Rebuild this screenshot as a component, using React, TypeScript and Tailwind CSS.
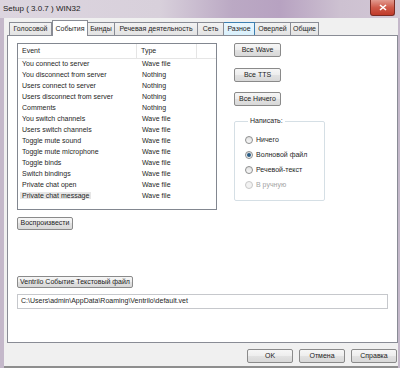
import React from "react";

const events: [string, string][] = [
  ["You connect to server", "Wave file"],
  ["You disconnect from server", "Nothing"],
  ["Users connect to server", "Nothing"],
  ["Users disconnect from server", "Nothing"],
  ["Comments", "Nothing"],
  ["You switch channels", "Wave file"],
  ["Users switch channels", "Wave file"],
  ["Toggle mute sound", "Wave file"],
  ["Toggle mute microphone", "Wave file"],
  ["Toggle binds", "Wave file"],
  ["Switch bindings", "Wave file"],
  ["Private chat open", "Wave file"],
  ["Private chat message", "Wave file"],
];

const tabs = [
  { name: "Голосовой", w: "w-[43px]" },
  { name: "События", w: "w-[36px]", active: true },
  { name: "Бинды", w: "w-[27px]" },
  { name: "Речевая деятельность", w: "w-[83px]" },
  { name: "Сеть", w: "w-[26px]" },
  { name: "Разное", w: "w-[31px]", hover: true },
  { name: "Оверлей", w: "w-[36px]" },
  { name: "Общие", w: "w-[28px]" },
];

const radios = [
  { label: "Ничего" },
  { label: "Волновой файл", checked: true },
  { label: "Речевой-текст" },
  { label: "В ручную", disabled: true },
];

const Btn = ({
  children,
  className = "",
}: {
  children: React.ReactNode;
  className?: string;
}) => (
  <div
    className={`flex items-center justify-center rounded-[2px] border border-[#8a8a8a] bg-[linear-gradient(#f6f6f6,#ededed_50%,#e2e2e2_50%,#d8d8d8)] text-[7px] text-[#222] ${className}`}
  >
    {children}
  </div>
);

export default function App() {
  return (
    <div
      className="flex h-[368px] w-[400px] flex-col overflow-hidden bg-[#c4b8ca] text-[#262626]"
      style={{ fontFamily: '"Liberation Sans", Arial, sans-serif' }}
    >
      {/* title bar */}
      <div className="flex h-[18px] shrink-0 items-start bg-[linear-gradient(90deg,#dcd5df_0%,#d8d0db_40%,#bba9c4_58%,#b7a2c1_70%,#cdc1d1_85%,#d2c7d5_100%)]">
        <span className="mt-[3px] ml-[3px] text-[8px] text-[#222]">
          Setup ( 3.0.7 ) WIN32
        </span>
        <div className="ml-auto mr-[5px] flex h-[16px] w-[25px] items-center justify-center rounded-b-[3px] border border-[#7a2a22] border-t-0 bg-[linear-gradient(#e29a8f,#cf5a4a_50%,#c03a2a)]">
          <svg width="8" height="7" viewBox="0 0 8 7">
            <path d="M1 1L7 6M7 1L1 6" stroke="white" strokeWidth="1.6" />
          </svg>
        </div>
      </div>

      {/* window body */}
      <div className="ml-[4px] mr-[2px] flex flex-1 flex-col border-b-2 border-[#8e8e8e] bg-[#f0f0f0]">
        {/* tabs */}
        <div className="flex h-[17px] shrink-0 items-end pl-[5px]">
          {tabs.map((t) =>
            t.active ? (
              <div
                key={t.name}
                className={`relative z-10 -mb-px flex h-[16px] ${t.w} items-start justify-center border border-b-0 border-[#898c95] bg-white pt-[3px] text-[7px]`}
              >
                {t.name}
              </div>
            ) : (
              <div
                key={t.name}
                className={`flex h-[13px] ${t.w} items-center justify-center border border-l-0 border-b-0 text-[7px] first:border-l ${
                  t.hover
                    ? "border-[#3c7fb1] bg-[linear-gradient(#eaf6fd,#d9f0fc)]"
                    : "border-[#898c95] bg-[linear-gradient(#f2f2f2,#e3e3e3)]"
                }`}
              >
                {t.name}
              </div>
            )
          )}
        </div>

        {/* panel */}
        <div className="ml-[3px] flex h-[308px] shrink-0 flex-col border border-[#898c95] bg-white pt-[7px] pl-[9px]">
          <div className="flex">
            <div className="flex flex-col">
              {/* list view */}
              <div className="flex h-[167px] w-[200px] flex-col border border-[#828790] bg-white">
                <div className="flex h-[15px] shrink-0 border-b border-[#e5e5e5] text-[7px]">
                  <div className="flex w-[119px] items-center border-r border-[#e5e5e5] pl-[4px]">
                    Event
                  </div>
                  <div className="flex w-[60px] items-center border-r border-[#e5e5e5] pl-[4px]">
                    Type
                  </div>
                </div>
                {events.map(([ev, type], i) => (
                  <div key={ev} className="flex h-[11px] items-center text-[7px]">
                    <div className="w-[120px] pl-[2px]">
                      <span
                        className={`px-[2px] ${
                          i === events.length - 1 ? "bg-[#e6e6e6]" : ""
                        }`}
                      >
                        {ev}
                      </span>
                    </div>
                    <div className="pl-[4px]">{type}</div>
                  </div>
                ))}
              </div>
              <Btn className="mt-[7px] h-[13px] w-[56px] border-[#3c7fb1] bg-[linear-gradient(#eaf6fd,#d9f0fc_50%,#bee6fd_50%,#a7d9f5)]">
                Воспроизвести
              </Btn>
            </div>

            {/* right column */}
            <div className="ml-[17px] flex flex-col">
              <Btn className="h-[14px] w-[47px]">Все Wave</Btn>
              <Btn className="mt-[11px] h-[14px] w-[47px]">Все TTS</Btn>
              <Btn className="mt-[10px] h-[14px] w-[47px]">Все Ничего</Btn>
              <fieldset className="mt-[10px] h-[85px] w-[91px] rounded-[2px] border border-[#d5dfe5] pl-[10px] pt-[8px]">
                <legend className="ml-[3px] px-[2px] text-[7px]">
                  Написать:
                </legend>
                <div className="flex flex-col gap-[4px]">
                  {radios.map((r) => (
                    <div
                      key={r.label}
                      className={`flex h-[11px] items-center gap-[3px] text-[7px] ${
                        r.disabled ? "text-[#a3a3a3]" : ""
                      }`}
                    >
                      <div
                        className={`flex h-[8px] w-[8px] items-center justify-center rounded-full border ${
                          r.disabled
                            ? "border-[#c8c8c8] bg-[#f2f2f2]"
                            : "border-[#8e8f8f] bg-[linear-gradient(#e0e0e0,#fafafa)]"
                        }`}
                      >
                        {r.checked && (
                          <div className="h-[4px] w-[4px] rounded-full bg-[#2a5d85]" />
                        )}
                      </div>
                      {r.label}
                    </div>
                  ))}
                </div>
              </fieldset>
            </div>
          </div>

          <Btn className="mt-[46px] h-[12px] w-[116px]">
            Ventrilo Событие Текстовый файл
          </Btn>
          <div className="mt-[6px] flex h-[15px] w-[371px] items-center border border-[#c6c8cc] pl-[3px] text-[7px]">
            C:\Users\admin\AppData\Roaming\Ventrilo\default.vet
          </div>
        </div>

        {/* bottom buttons */}
        <div className="flex justify-end gap-[6px] pt-[6px] pr-[1px]">
          <Btn className="h-[14px] w-[46px]">OK</Btn>
          <Btn className="h-[14px] w-[46px]">Отмена</Btn>
          <Btn className="h-[14px] w-[46px]">Справка</Btn>
        </div>
      </div>
    </div>
  );
}
